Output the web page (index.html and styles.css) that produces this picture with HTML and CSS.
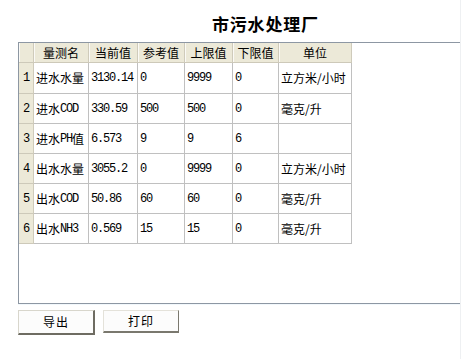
FILE: index.html
```html
<!DOCTYPE html>
<html>
<head>
<meta charset="utf-8">
<link rel="stylesheet" href="styles.css">
</head>
<body>
<div class="page">
  <div class="title">市污水处理厂</div>
  <div class="panel">
    <div class="grid">
      <div class="hc corner"></div>
      <div class="hc">量测名</div>
      <div class="hc">当前值</div>
      <div class="hc">参考值</div>
      <div class="hc">上限值</div>
      <div class="hc">下限值</div>
      <div class="hc">单位</div>

      <div class="rh first"><span class="n">1</span></div>
      <div class="c first">进水水量</div>
      <div class="c first"><span class="n">3130.14</span></div>
      <div class="c first"><span class="n">0</span></div>
      <div class="c first"><span class="n">9999</span></div>
      <div class="c first"><span class="n">0</span></div>
      <div class="c first">立方米/小时</div>

      <div class="rh"><span class="n">2</span></div>
      <div class="c">进水<span class="n">COD</span></div>
      <div class="c"><span class="n">330.59</span></div>
      <div class="c"><span class="n">500</span></div>
      <div class="c"><span class="n">500</span></div>
      <div class="c"><span class="n">0</span></div>
      <div class="c">毫克/升</div>

      <div class="rh"><span class="n">3</span></div>
      <div class="c">进水<span class="n">PH</span>值</div>
      <div class="c"><span class="n">6.573</span></div>
      <div class="c"><span class="n">9</span></div>
      <div class="c"><span class="n">9</span></div>
      <div class="c"><span class="n">6</span></div>
      <div class="c"></div>

      <div class="rh"><span class="n">4</span></div>
      <div class="c">出水水量</div>
      <div class="c"><span class="n">3055.2</span></div>
      <div class="c"><span class="n">0</span></div>
      <div class="c"><span class="n">9999</span></div>
      <div class="c"><span class="n">0</span></div>
      <div class="c">立方米/小时</div>

      <div class="rh"><span class="n">5</span></div>
      <div class="c">出水<span class="n">COD</span></div>
      <div class="c"><span class="n">50.86</span></div>
      <div class="c"><span class="n">60</span></div>
      <div class="c"><span class="n">60</span></div>
      <div class="c"><span class="n">0</span></div>
      <div class="c">毫克/升</div>

      <div class="rh"><span class="n">6</span></div>
      <div class="c">出水<span class="n">NH3</span></div>
      <div class="c"><span class="n">0.569</span></div>
      <div class="c"><span class="n">15</span></div>
      <div class="c"><span class="n">15</span></div>
      <div class="c"><span class="n">0</span></div>
      <div class="c">毫克/升</div>
    </div>
  </div>
  <div class="buttons">
    <button class="btn default">导出</button>
    <button class="btn">打印</button>
  </div>
</div>
</body>
</html>
```
FILE: styles.css
```css
html, body {
  margin: 0;
  padding: 0;
  background: #ffffff;
}
body {
  width: 476px;
  height: 359px;
  overflow: hidden;
  font-family: "Noto Sans CJK SC", "Liberation Sans", sans-serif;
  font-size: 12px;
  color: #000;
  border-right: 0;
}
.page {
  padding-left: 18px;
  width: 442px;
  height: 359px;
  border-right: 1px solid #eef0f2;
  box-sizing: content-box;
}
.title {
  height: 42px;
  box-sizing: border-box;
  padding-top: 14px;
  padding-left: 194px;
  font-size: 17px;
  font-weight: bold;
  line-height: 20px;
  letter-spacing: 0.8px;
}
.panel {
  height: 262px;
  box-sizing: border-box;
  border-top: 1px solid #8d97a3;
  border-left: 1px solid #8d97a3;
  border-bottom: 1px solid #8d97a3;
  box-shadow: 0 1px 0 #f2f8fc;
}
.grid {
  display: grid;
  grid-template-columns: 15px 55px 49px 47px 48px 46px 73px;
  grid-template-rows: 20px 31px repeat(5, 30px);
  width: 333px;
}
.hc {
  background: #ece9d8;
  border-right: 1px solid #cfcbbb;
  border-bottom: 1px solid #cdc9b9;
  box-shadow: inset 1px 0 0 #fbfaf6;
  display: flex;
  align-items: center;
  justify-content: center;
  line-height: 1;
  box-sizing: border-box;
}
.hc:last-child {
  border-right: 1px solid #b8b5a8;
}
.corner {
  border-right: 1px solid #cfcbbb;
}
.rh {
  background: #ece9d8;
  border-right: 1px solid #cfcbbb;
  border-bottom: 1px solid #cdc9b9;
  display: flex;
  align-items: center;
  justify-content: center;
  box-sizing: border-box;
}
.c {
  border-right: 1px solid #c0c0c0;
  border-bottom: 1px solid #c0c0c0;
  display: flex;
  align-items: center;
  padding-left: 2px;
  box-sizing: border-box;
  white-space: nowrap;
  line-height: 1;
}
.n {
  font-family: "Liberation Mono", monospace;
  font-size: 12px;
  letter-spacing: -1.2px;
}
.buttons {
  display: flex;
  gap: 8px;
  margin-top: 6px;
  align-items: flex-start;
}
.btn {
  font-family: "Noto Sans CJK SC", "Liberation Sans", sans-serif;
  font-size: 12px;
  color: #000;
  background: #fcfcfc;
  width: 76px;
  height: 23px;
  padding: 0;
  margin: 0;
  line-height: 1;
  border-style: solid;
  border-width: 1px 1px 2px 1px;
  border-color: #e4e2da #7a786e #7a786e #e4e2da;
  letter-spacing: 1px;
}
.btn.default {
  width: 77px;
  height: 25px;
  border-width: 1px 2px 2px 1px;
  border-color: #d8d6cc #6e6c62 #6e6c62 #d8d6cc;
}
```
